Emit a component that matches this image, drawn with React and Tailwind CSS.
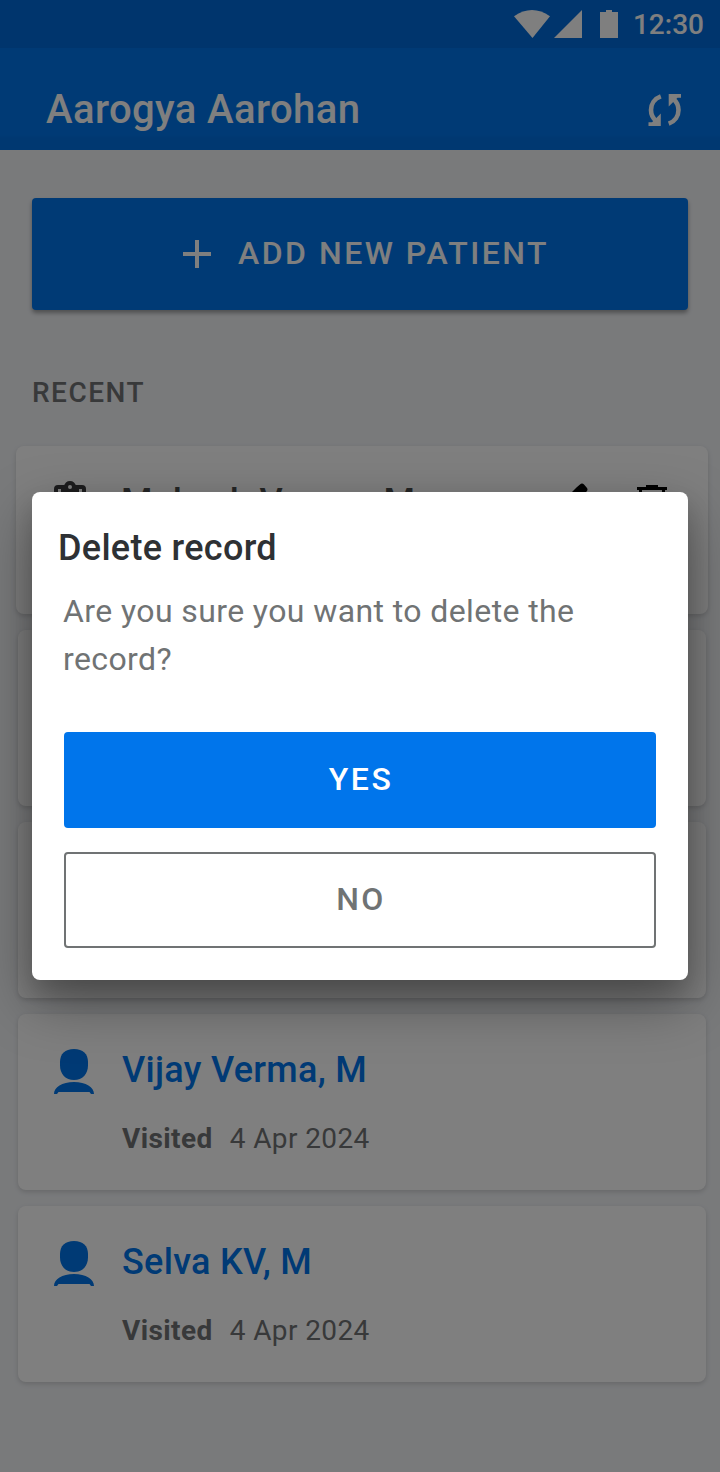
import React from 'react'

const patients = [
  { name: 'Vijay Verma, M', visited: '4 Apr 2024' },
  { name: 'Selva KV, M', visited: '4 Apr 2024' },
]

function StatusBar(){
  return (
    <div className="h-12 bg-[#006bdb] flex items-center justify-end pr-4 text-white">
      <svg className="w-9 h-7" viewBox="0 0 36 28" fill="currentColor"><path d="M0 6.3Q18-6.300 36 6.300L18.500 28Z" /></svg>
      <svg className="w-7 h-7 ml-1" viewBox="0 0 28 28" fill="currentColor"><path d="M28 0V28H0Z" /></svg>
      <svg className="w-[18px] h-7 ml-[18px]" viewBox="0 0 18 28" fill="currentColor"><path d="M6 0h6v2h6v26H0V2h6Z" /></svg>
      <span className="ml-[15px] mt-[2px] text-[28px] leading-none font-medium">12:30</span>
    </div>
  )
}

function SyncIcon(){
  return (
    <svg className="w-[34px] h-8" viewBox="0 0 34 32" fill="none">
      <path d="M12.800 2.300C6.500 4.500 3 10 3 16C3 20.500 5 24.500 8.500 27.300" stroke="currentColor" strokeWidth="4.600" />
      <path d="M0.500 32V28.300H4L12.800 19.500V32Z" fill="currentColor" />
      <path d="M20.700 29.700C27 27.500 30.500 22 30.500 16C30.500 11.500 28.500 7.500 25 4.700" stroke="currentColor" strokeWidth="4.600" />
      <path d="M33 0V3.700H29.500L20.700 12.500V0Z" fill="currentColor" />
    </svg>
  )
}

function PersonIcon(){
  return (
    <svg className="w-10 h-[46px] shrink-0" viewBox="0 0 40 46" fill="currentColor">
      <path d="M20 0C29 0 34 5 34 13V16.500C34 25 28.500 31 20 31S6 25 6 16.500V13C6 5 11 0 20 0Z" />
      <path d="M0 45C0 38 8 33 20 33S40 38 40 45H37L35.500 43H4.500L3 45Z" />
    </svg>
  )
}

function PatientCard({ name, visited }){
  return (
    <div className="h-44 rounded-lg bg-white shadow-[0_2px_5px_rgba(0,0,0,0.15)] pl-9 pt-[35px] flex items-start gap-7">
      <span className="text-[#0075eb]"><PersonIcon /></span>
      <div>
        <div className="text-[36px] leading-[42px] font-medium tracking-[0.3px] text-[#0075eb]">{name}</div>
        <div className="mt-8 text-[28px] leading-8 text-[#707374] flex gap-[17px]">
          <span className="font-bold tracking-[0.4px]">Visited</span>
          <span className="tracking-[0.4px]">{visited}</span>
        </div>
      </div>
    </div>
  )
}

// card whose record is being deleted, mostly under the dialog
function SelectedCard(){
  return (
    <div className="h-[168px] rounded-lg bg-white shadow-[0_2px_5px_rgba(0,0,0,0.15)] pl-[38px] pr-[41px] pt-[35px] flex items-start">
      <svg className="w-8 h-10" viewBox="0 0 32 40" fill="none" stroke="#3b3b3c" strokeWidth="4">
        <rect x="2" y="6" width="28" height="32" rx="2" />
        <path d="M9 6H12C12 0.800 20 0.800 20 6H23V12H9Z" fill="#3b3b3c" />
        <circle cx="16" cy="6" r="2" fill="#fff" stroke="none" />
      </svg>
      <div className="ml-[35px] text-[36px] leading-[42px] font-medium tracking-[0.25px] text-[#4b4c4d]">Mukesh Verma, M</div>
      <div className="ml-auto flex gap-12 text-black">
        <svg className="w-9 h-9 mt-[2px]" viewBox="0 0 36 36" fill="currentColor"><path d="M0 28L24 4L27 1.500Q29-0.500 31 1.500L34 5Q35 6.500 34 8L8 35H0Z" /></svg>
        <svg className="w-[30px] h-9 mt-1" viewBox="0 0 30 36" fill="none"><path d="M0 3.500H30M9 1.500H21M3.500 4V34H26.500V4" stroke="currentColor" strokeWidth="3" /></svg>
      </div>
    </div>
  )
}

function DeleteDialog(){
  return (
    <div className="absolute left-8 right-8 top-[492px] h-[488px] rounded-lg bg-white px-8 pb-8 flex flex-col shadow-[0_22px_56px_rgba(0,0,0,0.38),0_14px_24px_rgba(0,0,0,0.14)]">
      <h2 className="-ml-[6px] mt-[35px] text-[36px] leading-[42px] font-medium tracking-[0.3px] text-[#2e3134]">Delete record</h2>
      <p className="-ml-[1px] mt-[18px] text-[32px] leading-12 tracking-[0.4px] text-[#707374]">Are you sure you want to delete the record?</p>
      <div className="mt-auto flex flex-col gap-6 text-[32px] font-medium tracking-[2.5px]">
        <button className="h-24 rounded bg-[#0075eb] text-white pb-[2px] pl-[2px]">YES</button>
        <button className="h-24 rounded border-2 border-[#707374] text-[#707374] pb-[2px] pl-[2px]">NO</button>
      </div>
    </div>
  )
}

export default function App(){
  return (
    <div className="relative w-[720px] h-[1472px] overflow-hidden bg-[#f2f4f7] font-['Roboto',sans-serif]">
      <StatusBar />
      <header className="h-[102px] bg-[#0075eb] flex items-center justify-between pl-[46px] pr-[38px] pt-[22px] text-white shadow-[inset_0_-16px_2px_-2px_rgba(0,0,0,0.03)]">
        <h1 className="text-[40px] leading-[48px] font-medium tracking-[0.4px]">Aarogya Aarohan</h1>
        <SyncIcon />
      </header>

      <main className="px-4">
        <button className="mx-4 mt-12 w-[656px] h-28 rounded bg-[#0075eb] text-white flex items-center pl-[151px] shadow-[0_3px_4px_rgba(0,0,0,0.35)]">
          <svg className="w-7 h-7" viewBox="0 0 28 28" stroke="currentColor" strokeWidth="4"><path d="M14 0V28M0 14H28" /></svg>
          <span className="ml-[27px] pb-[2px] text-[32px] font-medium tracking-[2.5px]">ADD NEW PATIENT</span>
        </button>
        <div className="ml-4 mt-[67px] text-[28px] leading-8 font-medium tracking-[1.5px] text-[#707374]">RECENT</div>

        <div className="mt-[37px] -mr-1 flex flex-col gap-4">
          <SelectedCard />
          <div className="mx-[2px] flex flex-col gap-4">
            <div className="h-44 rounded-lg bg-white shadow-[0_2px_5px_rgba(0,0,0,0.15)]" />
            <div className="h-44 rounded-lg bg-white shadow-[0_2px_5px_rgba(0,0,0,0.15)]" />
            {patients.map(p => <PatientCard key={p.name} {...p} />)}
          </div>
        </div>
      </main>

      <div className="absolute inset-0 bg-black/50" />
      <DeleteDialog />
    </div>
  )
}
